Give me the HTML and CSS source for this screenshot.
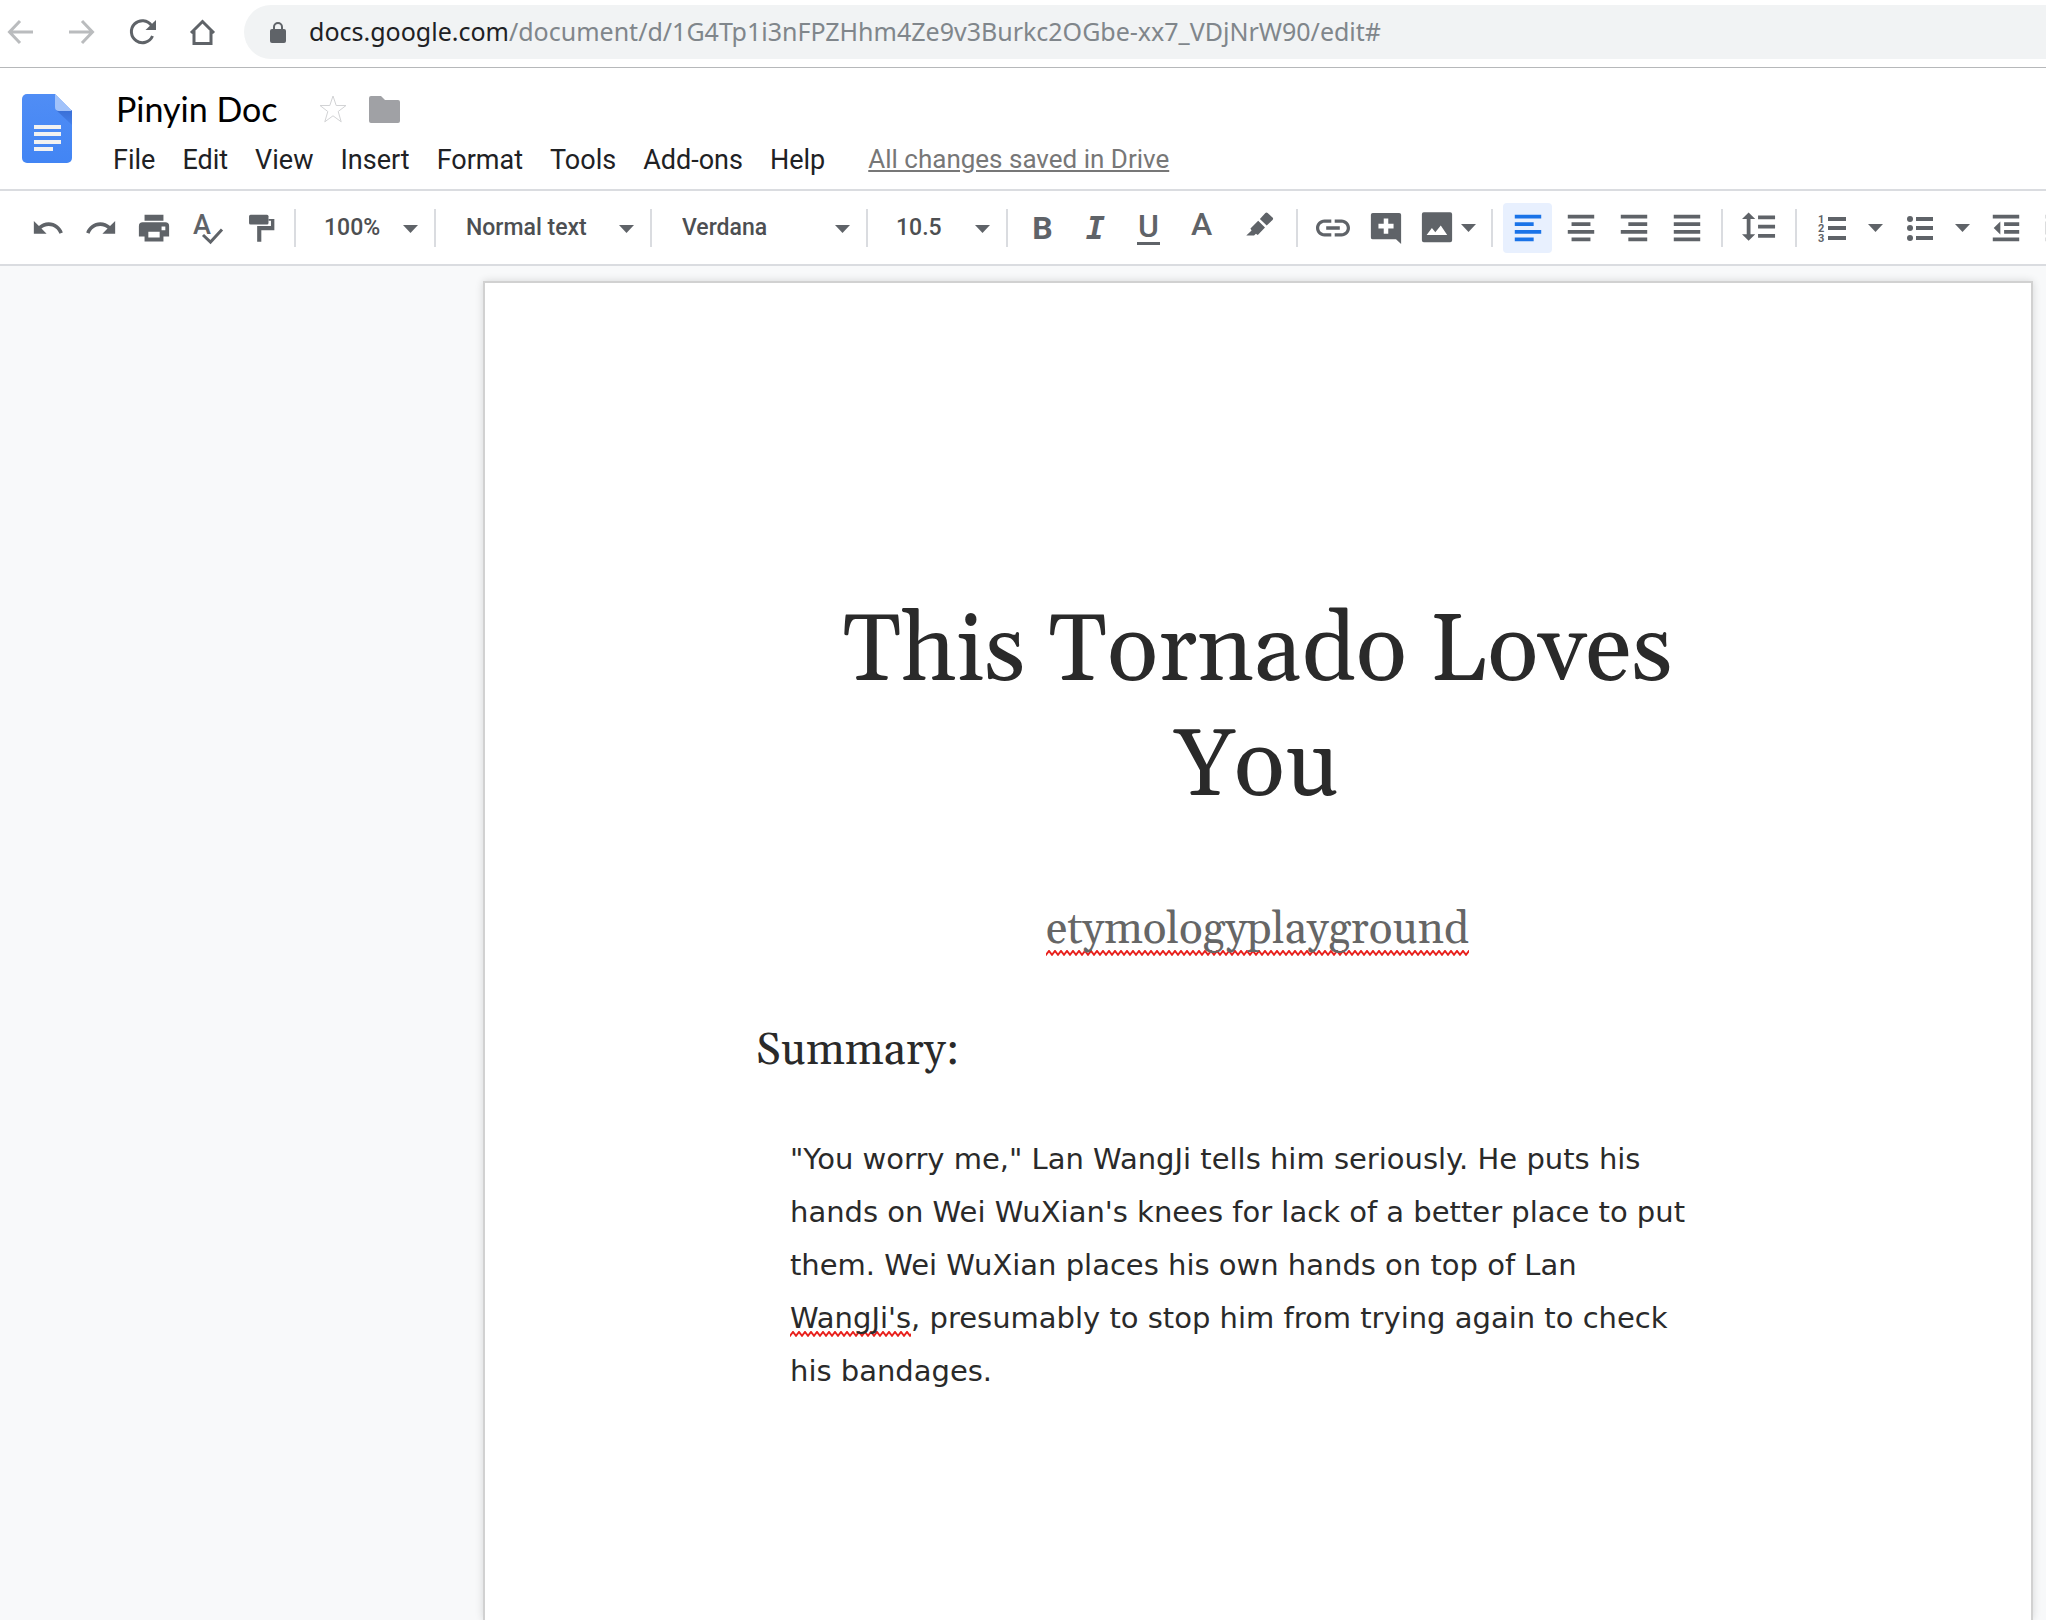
FILE: index.html
```html
<!DOCTYPE html>
<html lang="en">
<head>
<meta charset="utf-8">
<meta name="viewport" content="width=device-width, initial-scale=1">
<title>Pinyin Doc</title>
<link rel="stylesheet" href="styles.css">
</head>
<body>

<nav class="browser-bar" aria-label="Browser">
  <div class="nav-buttons">
    <button class="nav-button is-disabled" aria-label="Back">
      <svg viewBox="0 0 28 28"><path d="M26 14H3M13 3 2.500 14 13 25"/></svg>
    </button>
    <button class="nav-button is-disabled" aria-label="Forward">
      <svg viewBox="0 0 28 28"><path d="M1 14H24M14 3 24.500 14 14 25"/></svg>
    </button>
    <button class="nav-button" aria-label="Reload">
      <svg viewBox="0 0 28 28"><path d="M23.500 18A11 11 0 1 1 22.500 7.500" stroke-width="3"/><path class="solid" d="M27 2V12H16.500z"/></svg>
    </button>
    <button class="nav-button" aria-label="Home">
      <svg viewBox="0 0 28 28"><path d="M1 15 12.500 3.500 24 15M4 13V25.500H21V13" stroke-width="3"/></svg>
    </button>
  </div>
  <div class="address">
    <svg class="lock" viewBox="0 0 16 21" aria-hidden="true"><rect x="0" y="7" width="16" height="14" rx="2"/><path d="M4 8V5a4 4 0 0 1 8 0v3" fill="none" stroke="#5f6368" stroke-width="2"/></svg>
    <span class="url"><span class="host">docs.google.com</span>/document/d/1G4Tp1i3nFPZHhm4Ze9v3Burkc2OGbe-xx7_VDjNrW90/edit#</span>
  </div>
</nav>

<header class="doc-header">
  <a class="logo" href="#" aria-label="Docs home">
    <svg viewBox="0 0 50 69">
      <defs>
        <linearGradient id="sheet" x1="0" y1="0" x2="0" y2="1"><stop offset="0" stop-color="#508df5"/><stop offset="1" stop-color="#4285f4"/></linearGradient>
        <linearGradient id="fold" x1="0" y1="0" x2="0" y2="1"><stop offset="0" stop-color="#3a6fd6"/><stop offset="1" stop-color="#4480ea"/></linearGradient>
      </defs>
      <path fill="url(#sheet)" d="M5 0H33L50 17V64a5 5 0 0 1-5 5H5a5 5 0 0 1-5-5V5a5 5 0 0 1 5-5z"/>
      <path fill="url(#fold)" d="M34 16H50V31z"/>
      <path fill="#a1c2fa" d="M33 0 50 17H37a4 4 0 0 1-4-4z"/>
      <path fill="#f1f1f1" d="M12 31H39v4H12zM12 38H39v4H12zM12 46H39v4H12zM12 53H31v4H12z"/>
    </svg>
  </a>
  <div class="header-main">
    <div class="title-row">
      <input class="doc-name" type="text" value="Pinyin Doc" aria-label="Document name" spellcheck="false">
      <button class="title-button" aria-label="Star">
        <svg class="star" viewBox="0 0 30 30"><path d="M15 2 18.200 11.500H28L20.200 17.500 23.200 27.800 15 21.800 6.800 27.800 9.800 17.500 2 11.500H11.800z"/></svg>
      </button>
      <button class="title-button" aria-label="Move to folder">
        <svg class="folder" viewBox="0 0 31 27"><path d="M2 0H12L16 4H29a2 2 0 0 1 2 2V25a2 2 0 0 1-2 2H2a2 2 0 0 1-2-2V2a2 2 0 0 1 2-2z"/></svg>
      </button>
    </div>
    <div class="menu-row">
      <button class="menu">File</button>
      <button class="menu">Edit</button>
      <button class="menu">View</button>
      <button class="menu">Insert</button>
      <button class="menu">Format</button>
      <button class="menu">Tools</button>
      <button class="menu">Add-ons</button>
      <button class="menu">Help</button>
      <a class="save-state" href="#">All changes saved in Drive</a>
    </div>
  </div>
</header>

<div class="toolbar" role="toolbar" aria-label="Formatting">
  <div class="group">
    <button class="tool" aria-label="Undo"><svg viewBox="0 0 24 24"><path d="M12.500 8c-2.650 0-5.050.990-6.900 2.600L2 7v9h9l-3.620-3.620c1.390-1.160 3.160-1.880 5.120-1.880 3.540 0 6.550 2.310 7.600 5.500l2.370-.780C21.080 11.030 17.150 8 12.500 8z"/></svg></button>
    <button class="tool" aria-label="Redo"><svg viewBox="0 0 24 24"><path d="M18.400 10.600C16.550 8.990 14.150 8 11.500 8c-4.650 0-8.580 3.030-9.960 7.220L3.900 16c1.050-3.190 4.050-5.500 7.600-5.500 1.950 0 3.730.720 5.120 1.880L13 16h9V7l-3.600 3.600z"/></svg></button>
    <button class="tool" aria-label="Print"><svg viewBox="0 0 18 18"><path fill-rule="evenodd" d="M4 2H14V5.200H4zM3 6H15a2 2 0 0 1 2 2V13.500H14V16.200H4V13.500H1V8a2 2 0 0 1 2-2zM6 11V14H12V11zM13 8.200V10.200H15V8.200z"/></svg></button>
    <button class="tool" aria-label="Spelling and grammar check"><svg viewBox="0 0 34 34"><text x="3" y="23" font-size="27" font-weight="500">A</text><path d="M13 24 20.500 31 32 18.500" fill="none" stroke="#5f6368" stroke-width="3"/></svg></button>
    <button class="tool" aria-label="Paint format"><svg viewBox="0 0 18 18"><rect x="3.200" y="2" width="10.300" height="5.200" rx=".8"/><path d="M13.500 4.200H16.600V10.200H9.700V16.300H7.500V8H14.800V5.200H13.500z"/></svg></button>
  </div>
  <div class="group">
    <div class="combo combo-small">
      <select aria-label="Zoom"><option>100%</option></select>
      <svg class="caret" viewBox="0 0 15 8" aria-hidden="true"><path d="M0 0H15L7.500 8z"/></svg>
    </div>
  </div>
  <div class="group">
    <div class="combo">
      <select aria-label="Styles"><option>Normal text</option></select>
      <svg class="caret" viewBox="0 0 15 8" aria-hidden="true"><path d="M0 0H15L7.500 8z"/></svg>
    </div>
  </div>
  <div class="group">
    <div class="combo">
      <select aria-label="Font"><option>Verdana</option></select>
      <svg class="caret" viewBox="0 0 15 8" aria-hidden="true"><path d="M0 0H15L7.500 8z"/></svg>
    </div>
  </div>
  <div class="group">
    <div class="combo combo-small">
      <select aria-label="Font size"><option>10.5</option></select>
      <svg class="caret" viewBox="0 0 15 8" aria-hidden="true"><path d="M0 0H15L7.500 8z"/></svg>
    </div>
  </div>
  <div class="group">
    <button class="tool letter bold" aria-label="Bold">B</button>
    <button class="tool letter italic" aria-label="Italic">I</button>
    <button class="tool letter underline" aria-label="Underline"><span>U</span></button>
    <button class="tool letter color" aria-label="Text color">A</button>
    <button class="tool tool-highlight" aria-label="Highlight color"><svg viewBox="0 0 18 18"><path d="M12.900 1.100q.6-.6 1.200 0L16.700 3.500q.6.6 0 1.200L13.600 7.700 10 4.200zM9.100 5.100 12.700 8.700 8.900 12.700 7.900 12 6.900 13H2.800L5.600 10.300 5 9.200z"/></svg></button>
  </div>
  <div class="group">
    <button class="tool" aria-label="Insert link"><svg viewBox="2 2 20 20"><path d="M3.900 12c0-1.710 1.390-3.100 3.100-3.100h4V7H7c-2.760 0-5 2.240-5 5s2.240 5 5 5h4v-1.900H7c-1.710 0-3.100-1.390-3.100-3.100zM8 13h8v-2H8v2zm9-6h-4v1.900h4c1.710 0 3.100 1.390 3.100 3.100s-1.390 3.100-3.100 3.100h-4V17h4c2.760 0 5-2.240 5-5s-2.240-5-5-5z"/></svg></button>
    <button class="tool" aria-label="Add comment"><svg viewBox="0 0 18 18"><path fill-rule="evenodd" d="M2 1H16a1 1 0 0 1 1 1V17.500L14.300 15H2a1 1 0 0 1-1-1V2a1 1 0 0 1 1-1zM7.800 4V6.800H5V9.200H7.800V12H10.200V9.200H13V6.800H10.200V4z"/></svg></button>
    <button class="tool tool-image" aria-label="Insert image"><svg viewBox="0 0 18 18"><path fill-rule="evenodd" d="M2 .7H16a1 1 0 0 1 1 1V15.500a1 1 0 0 1-1 1H2a1 1 0 0 1-1-1V1.700a1 1 0 0 1 1-1zM3.500 12.700H14.400L11 7.700 8.100 11.300 6.300 9z"/></svg><svg class="caret" viewBox="0 0 15 8"><path d="M0 0H15L7.500 8z"/></svg></button>
  </div>
  <div class="group">
    <button class="tool is-active" aria-label="Left align" aria-pressed="true"><svg viewBox="0 0 18 18"><path d="M2 2H16V4H2zM2 6H12V8H2zM2 10H16V12H2zM2 14H12V16H2z"/></svg></button>
    <button class="tool" aria-label="Center align"><svg viewBox="0 0 18 18"><path d="M2 2H16V4H2zM4 6H14V8H4zM2 10H16V12H2zM4 14H14V16H4z"/></svg></button>
    <button class="tool" aria-label="Right align"><svg viewBox="0 0 18 18"><path d="M2 2H16V4H2zM6 6H16V8H6zM2 10H16V12H2zM6 14H16V16H6z"/></svg></button>
    <button class="tool" aria-label="Justify"><svg viewBox="0 0 18 18"><path d="M2 2H16V4H2zM2 6H16V8H2zM2 10H16V12H2zM2 14H16V16H2z"/></svg></button>
  </div>
  <div class="group">
    <button class="tool tool-spacing" aria-label="Line spacing"><svg viewBox="0 0 18 18"><path d="M3.500.800 7 4.300H4.500V12.300H7L3.500 15.800 0 12.300H2.500V4.300H0zM8.500 2.400H17.500V4.400H8.500zM8.500 7.300H17.500V9.300H8.500zM8.500 12.200H17.500V14.200H8.500z"/></svg></button>
  </div>
  <div class="group">
    <button class="tool" aria-label="Numbered list"><svg viewBox="0 0 34 34"><path d="M13 6H31v4H13zM13 15H31v4H13zM13 25H31v4H13z"/><g font-size="11" font-weight="700"><text x="3" y="12">1</text><text x="3" y="21">2</text><text x="3" y="31">3</text></g></svg></button>
    <button class="tool tool-caret" aria-label="Numbered list options"><svg class="caret" viewBox="0 0 15 8"><path d="M0 0H15L7.500 8z"/></svg></button>
    <button class="tool" aria-label="Bulleted list"><svg viewBox="0 0 34 34"><path d="M14 6H31v4H14zM14 15H31v4H14zM14 25H31v4H14z"/><circle cx="8" cy="8" r="3"/><circle cx="8" cy="17" r="3"/><circle cx="8" cy="27" r="3"/></svg></button>
    <button class="tool tool-caret" aria-label="Bulleted list options"><svg class="caret" viewBox="0 0 15 8"><path d="M0 0H15L7.500 8z"/></svg></button>
    <button class="tool" aria-label="Decrease indent"><svg viewBox="0 0 18 18"><path d="M2 2H16V4H2zM8 6H16V8H8zM8 10H16V12H8zM2 14H16V16H2zM6 5.500V12.500L2.500 9z"/></svg></button>
    <button class="tool" aria-label="Increase indent"><svg viewBox="0 0 18 18"><path d="M2 2H16V4H2zM8 6H16V8H8zM8 10H16V12H8zM2 14H16V16H2zM2 5.500V12.500L5.500 9z"/></svg></button>
  </div>
</div>

<main class="canvas">
  <article class="page">
    <h1>This Tornado Loves You</h1>
    <p class="author"><span class="misspelled">etymologyplayground</span></p>
    <h2>Summary:</h2>
    <p class="summary">"You worry me," Lan WangJi tells him seriously. He puts his hands on Wei WuXian's knees for lack of a better place to put them. Wei WuXian places his own hands on top of Lan <span class="misspelled">WangJi's</span>, presumably to stop him from trying again to check his bandages.</p>
  </article>
</main>

</body>
</html>
```
FILE: styles.css
```css
* {
  box-sizing: border-box;
}

body {
  display: flex;
  flex-direction: column;
  min-height: 100vh;
  margin: 0;
  overflow-x: hidden;
  background: #fff;
  font-family: Roboto, sans-serif;
}

button,
input,
select {
  margin: 0;
  padding: 0;
  border: 0;
  background: none;
  color: inherit;
  font: inherit;
}

svg {
  display: block;
  overflow: visible;
}

/* Browser bar */

.browser-bar {
  display: flex;
  gap: 26px;
  padding: 5px 0 8px 7px;
  border-bottom: 1px solid #b6b8ba;
}

.nav-buttons {
  display: flex;
  align-items: center;
  gap: 33px;
}

.nav-button svg {
  width: 28px;
  height: 28px;
  fill: none;
  stroke: #5f6368;
  stroke-width: 3;
}

.nav-button .solid {
  fill: #5f6368;
  stroke: none;
}

.nav-button.is-disabled svg {
  stroke: #babcbe;
}

.address {
  display: flex;
  flex: 1;
  align-items: center;
  gap: 23px;
  height: 54px;
  padding-left: 26px;
  border-radius: 27px 0 0 27px;
  background: #f1f3f4;
}

.lock {
  width: 16px;
  height: 21px;
  fill: #5f6368;
}

.url {
  padding-bottom: 2px;
  color: #80868b;
  font: 25px/52px "Noto Sans", sans-serif;
  white-space: nowrap;
}

.host {
  color: #202124;
}

/* Document header */

.doc-header {
  display: flex;
  gap: 28px;
  padding: 19px 22px 9px;
  border-bottom: 2px solid #dadce0;
}

.logo {
  padding-top: 7px;
}

.logo svg {
  width: 50px;
  height: 69px;
}

.title-row {
  display: flex;
  align-items: center;
  gap: 21px;
  height: 44px;
  padding-left: 16px;
}

.doc-name {
  width: 181px;
  color: #000;
  font: 34px/44px Lato, sans-serif;
}

.star {
  width: 30px;
  height: 30px;
  fill: none;
  stroke: #d2d3d5;
  stroke-width: 1;
}

.folder {
  width: 31px;
  height: 27px;
  fill: #a0a1a5;
}

.menu-row {
  display: flex;
  align-items: center;
  gap: 1px;
  height: 40px;
  margin-top: 9px;
}

.menu {
  padding: 0 13px;
  color: #202124;
  font-size: 27px;
  line-height: 40px;
}

.save-state {
  margin-left: 29px;
  padding-bottom: 2px;
  color: #777;
  font-size: 26px;
  line-height: 38px;
}

/* Toolbar */

.toolbar {
  display: flex;
  align-items: center;
  height: 75px;
  padding-left: 13px;
  border-bottom: 2px solid #dadce0;
  color: #5f6368;
}

.group {
  display: flex;
  flex: none;
  align-items: center;
  gap: 4px;
  height: 38px;
  padding: 0 10px;
}

.group + .group {
  border-left: 2px solid #dadce0;
}

.tool {
  display: flex;
  flex: none;
  align-items: center;
  justify-content: center;
  width: 49px;
  height: 50px;
  border-radius: 4px;
}

.tool svg {
  width: 34px;
  height: 34px;
  fill: #5f6368;
}

.tool.is-active {
  background: #e8f0fe;
}

.tool.is-active svg {
  fill: #1a73e8;
}

.tool .caret,
.caret {
  width: 15px;
  height: 8px;
  fill: #5f6368;
}

.tool-image {
  gap: 7px;
  width: 67px;
}

.tool-spacing {
  width: 52px;
}

.tool-caret {
  width: 30px;
}

.tool-highlight {
  width: 56px;
}

.letter {
  font-size: 32px;
  font-weight: 500;
  line-height: 50px;
}

.bold {
  font-weight: 700;
}

.italic {
  font-family: "DejaVu Sans Mono", monospace;
  font-style: italic;
  font-weight: 700;
}

.underline span {
  width: 23px;
  border-bottom: 3px solid #5f6368;
  line-height: 32px;
}

.color {
  padding-bottom: 8px;
}

.combo {
  position: relative;
  width: 194px;
}

.combo select {
  width: 100%;
  height: 38px;
  padding-left: 20px;
  appearance: none;
  color: #4d4f52;
  font-size: 23px;
  font-weight: 500;
}

.combo-small {
  width: 118px;
}

.combo-small select {
  padding-left: 18px;
}

.combo .caret {
  position: absolute;
  top: 16px;
  right: 6px;
  pointer-events: none;
}

/* Page */

.canvas {
  display: flex;
  flex: 1;
  padding: 15px 13px 0 483px;
  background: #f8f9fa;
}

.page {
  flex: 1;
  padding: 312px 272px 0 271px;
  border: 2px solid #d1d1d1;
  border-bottom: 0;
  background: #fff;
  box-shadow: 0 0 8px rgba(0, 0, 0, 0.14);
  color: #2a2a2a;
  font-family: Gelasio, Georgia, "Liberation Serif", serif;
}

h1 {
  margin: 0;
  font-size: 95px;
  font-weight: 400;
  line-height: 115px;
  text-align: center;
}

.author {
  margin: 75px 0 61px;
  color: #666;
  font-size: 44px;
  line-height: 60px;
  text-align: center;
}

h2 {
  margin: 0;
  font-size: 44px;
  font-weight: 400;
  line-height: 60px;
}

.summary {
  margin: 52px 58px 0 34px;
  font-family: "DejaVu Sans", sans-serif;
  font-size: 29px;
  line-height: 53px;
}

.misspelled {
  padding-bottom: 2px;
  background: url("data:image/svg+xml,%3Csvg xmlns='http://www.w3.org/2000/svg' width='6' height='6'%3E%3Cpath d='M-1 6 3 1 7 6' fill='none' stroke='%23e8201c' stroke-width='2'/%3E%3C/svg%3E") repeat-x left bottom;
}

.author .misspelled {
  padding-bottom: 0;
  background-position: left bottom 2px;
}
```
